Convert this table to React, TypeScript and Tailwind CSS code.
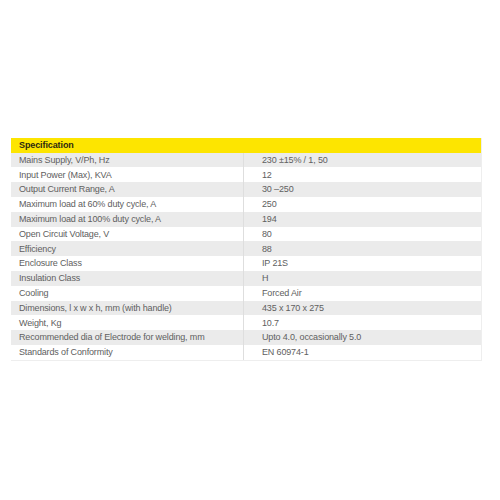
import React from 'react';

const rows: [string, string][] = [
  ['Mains Supply, V/Ph, Hz', '230 ±15% / 1, 50'],
  ['Input Power (Max), KVA', '12'],
  ['Output Current Range, A', '30 –250'],
  ['Maximum load at 60% duty cycle, A', '250'],
  ['Maximum load at 100% duty cycle, A', '194'],
  ['Open Circuit Voltage, V', '80'],
  ['Efficiency', '88'],
  ['Enclosure Class', 'IP 21S'],
  ['Insulation Class', 'H'],
  ['Cooling', 'Forced Air'],
  ['Dimensions, l x w x h, mm (with handle)', '435 x 170 x 275'],
  ['Weight, Kg', '10.7'],
  ['Recommended dia of Electrode for welding, mm', 'Upto 4.0, occasionally 5.0'],
  ['Standards of Conformity', 'EN 60974-1'],
];

const App: React.FC = () => {
  return (
    <div className="w-[500px] h-[500px] bg-white pt-[138px] pl-[11px] font-['Liberation_Sans',Arial,sans-serif]">
      <div className="w-[471px] border-b-[1.5px] border-r-[1.5px] border-[#eeeeee]">
        <div className="h-[14.7px] bg-[#fde500] flex items-center pl-2 pt-px text-[9px] font-bold text-[#2d2a10] tracking-[-0.1px]">
          Specification
        </div>
        {rows.map(([label, value], i) => (
          <div
            key={label}
            className={`h-[14.8px] flex items-center text-[9px] tracking-[-0.15px] text-[#606060] ${i % 2 === 0 ? 'bg-[#ebebeb]' : 'bg-white'}`}
          >
            <div className="w-[233px] h-full flex items-center pl-2 pt-px border-r border-[#dedede]">{label}</div>
            <div className="flex-1 pl-[18px] pt-px">{value}</div>
          </div>
        ))}
      </div>
    </div>
  );
};

export default App;
